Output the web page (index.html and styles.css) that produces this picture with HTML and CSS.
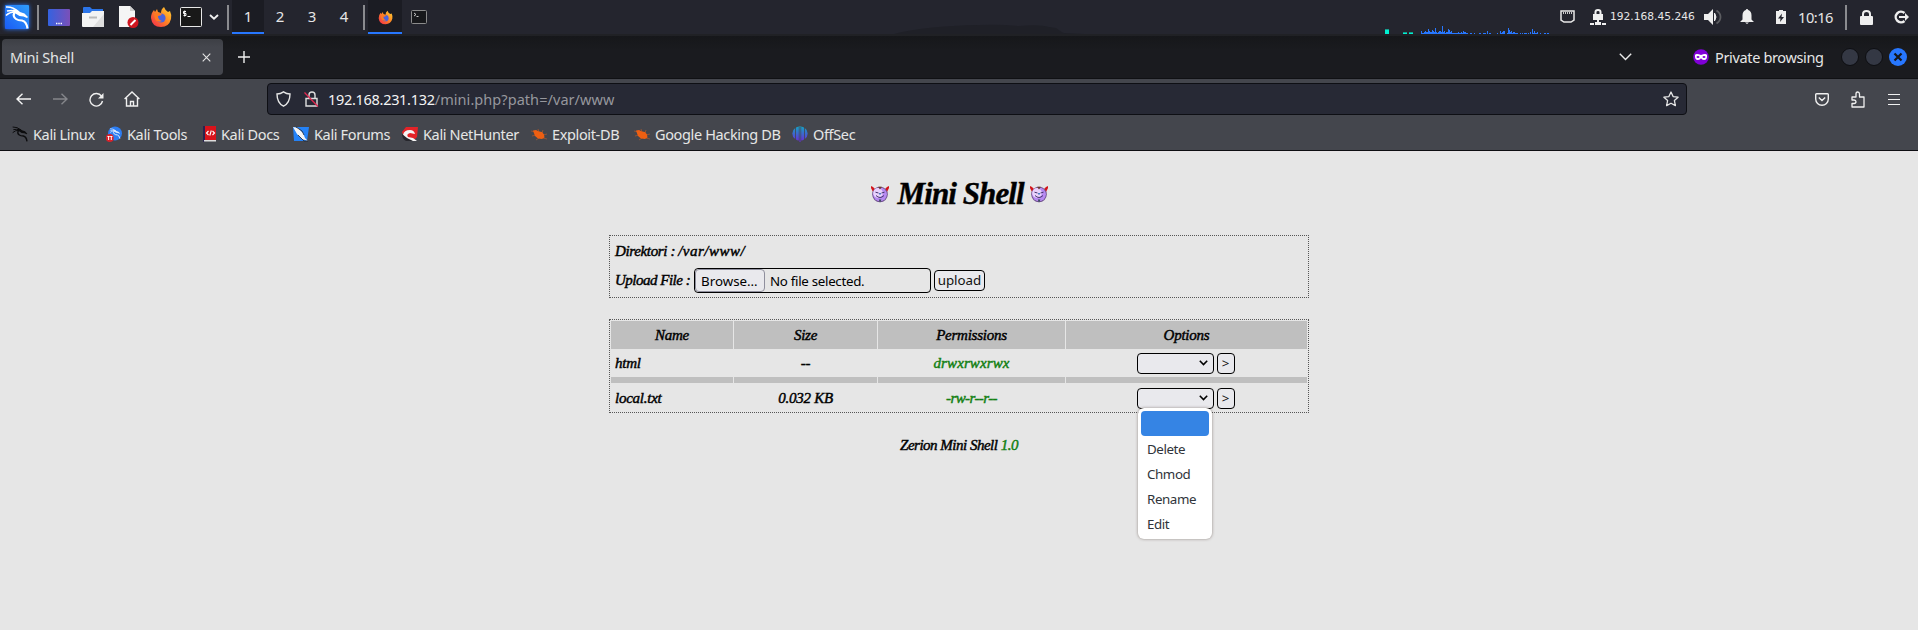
FILE: index.html
```
<!DOCTYPE html>
<html lang="en">
<head>
<meta charset="utf-8">
<title>Mini Shell</title>
<link rel="stylesheet" href="styles.css">
</head>
<body>
<svg class="defs" width="0" height="0">
  <defs>
    <linearGradient id="gKali" x1="0" y1="1" x2="1" y2="0"><stop offset="0" stop-color="#1a5cf5"/><stop offset="1" stop-color="#2f9dfb"/></linearGradient>
    <linearGradient id="gDesk" x1="0" y1="0" x2="1" y2="0"><stop offset="0" stop-color="#3462e0"/><stop offset="1" stop-color="#7b50b8"/></linearGradient>
    <linearGradient id="gFox" x1="1" y1="0" x2="0" y2="1"><stop offset="0" stop-color="#ffd83a"/><stop offset=".45" stop-color="#ff8a22"/><stop offset="1" stop-color="#f3234f"/></linearGradient>
    <linearGradient id="gOff" x1="0" y1="0" x2="0" y2="1"><stop offset="0" stop-color="#12a5c4"/><stop offset="1" stop-color="#6b27d9"/></linearGradient>
    <symbol id="dragon" viewBox="0 0 24 24">
      <path d="M1 1.500q7-.5 13 5M2 5.500q5-1 9 0M1 10q4-4 10-3.500" fill="none" stroke="currentColor" stroke-width="1.500"/>
      <path d="M10 6.500q-3 4 1 7 2 1.500 6 1.500 4.500 1 5.500 8" fill="none" stroke="currentColor" stroke-width="2.100"/>
      <path d="M8 4q4-.5 7 2.500l4.500 1.500 3.500 3.500-1 1-3.500-1.500-4-.5-4-2.500z" fill="currentColor"/>
    </symbol>
    <symbol id="fox" viewBox="0 0 22 22">
      <path d="M14 1q1 3 4 5l2-1q2 4 1 8-2 8-10 8Q2 21 1 12 1 7 4 4l1 2 2-3 1 3 3 1q0-4 3-6z" fill="url(#gFox)"/>
      <circle cx="11" cy="12" r="4.600" fill="#4a63dc"/>
      <path d="M4 8q4-2 8 0-1 2-4 2 0 4 4 5-5 2-7-2z" fill="#ff7a22"/>
    </symbol>
    <symbol id="bug" viewBox="0 0 16 16">
      <path d="M0 5l5 1M1 10l4-1M5 14l3-2M7 3l1 3M12 4l-1 3M16 8l-4 1M16 13l-4-1" stroke="#a5572f" stroke-width=".8"/>
      <path d="M2 4.500l3-.5 3 1.500 3 .5 2 2.500 .5 3-2.500 1.500-4-.5-3-2.500z" fill="#ee5f12"/>
    </symbol>
    <symbol id="devil" viewBox="0 0 18 18">
      <path d="M0 1l2 1 2 2-2 3L0 3zM18 1l-2 1-2 2 2 3 2-4z" fill="#d3151c"/>
      <circle cx="9" cy="9.500" r="7.800" fill="#6e4f8c"/>
      <circle cx="9" cy="9.300" r="6.900" fill="#b78af2"/>
      <ellipse cx="7" cy="8" rx="4.800" ry="5" fill="#e9d2fd"/>
      <path d="M7 1.800h4L9 4.600z" fill="#6b3a2c"/>
      <path d="M4.500 7.200l3 .8M13.500 7.200l-3 .8M5 10.500q4 4 8 0" stroke="#45356e" fill="none"/>
      <path d="M8 8h2v1.500H8z" fill="#4b7fc4"/><path d="M7.800 14.500h2.600L9 17.500z" fill="#324b52"/>
    </symbol>
  </defs>
</svg>

<header class="panel">
  <svg class="kali" width="28" height="28" viewBox="0 0 28 28"><rect x="2" y="2" width="24" height="24" rx="1" fill="url(#gKali)"/><g color="#fff"><use href="#dragon" x="2" y="2.500" width="24" height="24"/></g></svg>
  <i class="sep s1"></i>
  <svg class="desk" width="22" height="17" viewBox="0 0 22 17"><rect width="22" height="17" rx="1" fill="url(#gDesk)"/><path d="M8 14.500h6" stroke="#fff" stroke-width="1.400" stroke-dasharray="1.400 .9"/></svg>
  <svg class="folder" width="22" height="20" viewBox="0 0 22 20"><path d="M1 1q0-1 1-1h6l2 2h11v6H1z" fill="#2b74e8"/><path d="M0 6h8l2-2h12v15q0 1-1 1H1q-1 0-1-1z" fill="#f3f3f3"/><path d="M22 7v13H11z" fill="#dedede"/><path d="M7 10.500h8" stroke="#bbb" stroke-width="2"/></svg>
  <svg class="doc" width="21" height="22" viewBox="0 0 21 22"><path d="M1 0h11l5 5v16H1z" fill="#f5f5f5"/><path d="M12 0v5h5z" fill="#cfcfcf"/><circle cx="15" cy="16.500" r="5.500" fill="#cf1620"/><path d="M12.500 19l5-5" stroke="#fff" stroke-width="2"/></svg>
  <svg class="foxi" width="22" height="22"><use href="#fox"/></svg>
  <svg class="term" width="22" height="20" viewBox="0 0 22 20"><rect x=".5" y=".5" width="21" height="19" rx="1" fill="#191919" stroke="#e8e8e8"/><path d="M6 4.500H3.500V6.500H6v2H3.500M4.700 3.500v6M7.500 9.500h3" fill="none" stroke="#fff"/></svg>
  <svg class="chev" width="10" height="6" viewBox="0 0 10 6"><path d="M1 1l4 3.600L9 1" fill="none" stroke="#f0f0f0" stroke-width="1.900"/></svg>
  <i class="sep s2"></i>
  <nav class="spaces"><span class="on">1</span><span>2</span><span>3</span><span>4</span></nav>
  <i class="sep s3"></i>
  <span class="task on"><svg width="15" height="15"><use href="#fox" width="15" height="15"/></svg></span>
  <svg class="task2" width="16" height="14" viewBox="0 0 16 14"><rect x=".5" y=".5" width="15" height="13" rx="1" fill="#17181b" stroke="#8b8b8b"/><path d="M3 3l2 1.500L3 6M5.500 6.500h2" fill="none" stroke="#d8d8d8" stroke-width=".9"/></svg>
  <svg class="hill" width="200" height="10" viewBox="0 0 200 10"><path d="M0 10Q30 2 85 1q20-1 40 1 20-2 30 1l7 1q5 4 8 5l20 1z" fill="#1f2027"/></svg>
  <svg class="graph" width="170" height="10" viewBox="0 0 170 10"><path d="M0 5h4v4H0zM18 8h4v1h-4zM24 8h4v1h-4z" fill="#00f0d0"/><path d="M0 4h4v1H0zM18 7h4v1h-4zM24 7h4v1h-4z" fill="#159c8d"/>
    <path fill="#2777ff" d="M36 6h1v2h1V8h1V7h1V6h1v1h1v0h1V4h1v2h1v1h2V5h1v1h1v1h1V3h1v4h1v1h1V7h1V6h2v1h1V1h1v6h1V6h1v2h1V7h2V4h1v1h1v2h1V6h1v2h6V7h1v1h2V7h1v1h1V6h1v1h2v1h2v1H36zM85 8h2v1h-2zM89 8h1v1h-1zM94 8h2v1h-2zM98 8h3v1h-3zM102 6h1v3h-1zM104 8h2v1h-2zM112 8h1v1h-1zM115 6h1v2h1V7h1V6h2v3h-5zM122 8h1V3h1v2h1v2h1V6h1v2h1V7h2v1h3v1h-11zM135 8h1v1h-1zM137 8h1v1h-1zM139 8h3v1h-3zM143 8h1v1h-1zM145 7h1v2h-1zM147 4h1v4h1V6h1v2h2V7h1v2h-6zM155 8h1v1h-1zM159 8h2v1h-2zM162 8h2v1h-2z"/></svg>
  <svg class="eth" width="15" height="13" viewBox="0 0 15 13"><path d="M1 1h13v9l-3 2H4l-3-2z" fill="none" stroke="#e8e8e8" stroke-width="1.500"/><path d="M3.500 2v2M5.500 2v2M7.500 2v2M9.500 2v2M11.500 2v2" stroke="#ccc"/></svg>
  <svg class="vpn" width="16" height="16" viewBox="0 0 16 16"><path d="M5.500 5V3q0-2 2.500-2t2.500 2v2" fill="none" stroke="#f0f0f0" stroke-width="2"/><path d="M3 5h10v6H3zM0 14h4v2H0zM5 13h6v3H5zM12 14h4v2h-4zM7 11h2v2H7z" fill="#f0f0f0"/></svg>
  <span class="ip">192.168.45.246</span>
  <svg class="vol" width="18" height="16" viewBox="0 0 18 16"><path d="M0 5h4l5-5v16l-5-5H0z" fill="#eee"/><path d="M10.500 4q3 4 0 8z" fill="#eee" stroke="#eee"/><path d="M12.500 1.500q4 2.500 4 6.500t-4 6.500" fill="none" stroke="#5c5d61" stroke-width="1.800"/></svg>
  <svg class="bell" width="14" height="15" viewBox="0 0 14 15"><path d="M7 0q1 0 1.200 1 3.300 1 3.300 5.500v4L14 13H0l2.500-2.500v-4Q2.500 2 5.800 1 6 0 7 0zM5 13.500h4L7 15z" fill="#eee"/></svg>
  <svg class="batt" width="10" height="14" viewBox="0 0 10 14"><path d="M0 1h3V0h4v1h3v13H0z" fill="#eee"/><path d="M6 3.500L2 8.500h2.500L4 12l4-5H5.500z" fill="#24252d"/></svg>
  <span class="clock">10:16</span>
  <i class="sep s4"></i>
  <svg class="lock" width="13" height="15" viewBox="0 0 13 15"><path d="M3 7V4q0-3 3.500-3T10 4v3" fill="none" stroke="#eee" stroke-width="2"/><rect y="6" width="13" height="9" rx="1" fill="#eee"/></svg>
  <svg class="out" width="15" height="14" viewBox="0 0 15 14"><path d="M10.500 3A5.300 5.300 0 1 0 10.500 11" fill="none" stroke="#eee" stroke-width="2.400"/><path d="M5 6h6V3l4 4-4 4V8H5z" fill="#eee"/></svg>
</header>

<div class="tabs">
  <div class="tab"><span>Mini Shell</span><svg width="9" height="9" viewBox="0 0 9 9"><path d="M.7.7l7.600 7.600M8.300.7L.7 8.300" stroke="#e4e4e4" stroke-width="1.100"/></svg></div>
  <svg class="plus" width="12" height="12" viewBox="0 0 12 12"><path d="M6 0v12M0 6h12" stroke="#f0f0f0" stroke-width="1.400"/></svg>
  <svg class="all" width="13" height="8" viewBox="0 0 13 8"><path d="M.8.8l5.700 5.700L12.200.8" fill="none" stroke="#eaeaea" stroke-width="1.400"/></svg>
  <svg class="mask" width="16" height="16" viewBox="0 0 16 16"><circle cx="8" cy="8" r="7.800" fill="#8000d7"/><path d="M8 6q5-2 6 0 .5 5-3 5-2 0-3-1.700Q7 11 5 11q-3.500 0-3-5 1-2 6 0z" fill="#fff"/><ellipse cx="5" cy="8" rx="1.500" ry="1" fill="#8000d7"/><ellipse cx="11" cy="8" rx="1.500" ry="1" fill="#8000d7"/></svg>
  <span class="pb">Private browsing</span>
  <i class="wb"></i><i class="wb"></i>
  <svg class="close" width="18" height="18" viewBox="0 0 18 18"><circle cx="9" cy="9" r="9" fill="#2777ff"/><path d="M5.500 5.500l7 7M12.500 5.500l-7 7" stroke="#15161c" stroke-width="2.200"/></svg>
</div>

<div class="toolbar">
  <div class="nav">
    <svg class="back" width="15" height="12" viewBox="0 0 15 12"><path d="M15 6H1M6.500.7L1 6l5.500 5.300" fill="none" stroke="#f4f4f4" stroke-width="1.400"/></svg>
    <svg class="fwd" width="15" height="12" viewBox="0 0 15 12"><path d="M0 6h14M8.500.7L14 6l-5.500 5.300" fill="none" stroke="#85868b" stroke-width="1.400"/></svg>
    <svg class="reload" width="15" height="15" viewBox="0 0 15 15"><path d="M12.500 4.200A6.300 6.300 0 1 0 13.500 9" fill="none" stroke="#f0f0f0" stroke-width="1.400"/><path d="M14.500 1v5.500H9z" fill="#f0f0f0"/></svg>
    <svg class="home" width="16" height="16" viewBox="0 0 16 16"><path d="M.6 8L8 1l7.400 7M2.500 7v8h11V7M6.500 15v-4.500h3V15" fill="none" stroke="#f0f0f0" stroke-width="1.400"/></svg>
    <div class="url">
      <svg width="15" height="16" viewBox="0 0 15 16"><path d="M7.500.8q3 2 6.500 2.200 0 9-6.500 12.200Q1 12 1 3 4.500 2.800 7.500.8z" fill="none" stroke="#e6e6e6" stroke-width="1.400"/></svg>
      <svg class="insecure" width="15" height="16" viewBox="0 0 15 16"><path d="M5 7V4q0-3 3-3t3 3v3M2 15V7.500h11V15z" fill="none" stroke="#dedede" stroke-width="1.400"/><path d="M.5 1.500l13.500 14" stroke="#e22850" stroke-width="1.300"/></svg>
      <span class="addr"><b>192.168.231.132</b><span>/mini.php?path=/var/www</span></span>
      <svg class="star" width="16" height="16" viewBox="0 0 16 16"><path d="M8 1l2.100 4.600 5 .6-3.700 3.400 1 5L8 12.200 3.600 14.600l1-5L.9 6.200l5-.6z" fill="none" stroke="#e6e6e6" stroke-width="1.300" stroke-linejoin="round"/></svg>
    </div>
    <svg class="pocket" width="14" height="13" viewBox="0 0 14 13"><path d="M1.500.7h11q.8 0 .8.800v4.500a6.300 6.300 0 0 1-12.600 0V1.500q0-.8.800-.8zM3.800 4.500L7 7.500l3.200-3" fill="none" stroke="#f0f0f0" stroke-width="1.400"/></svg>
    <svg class="ext" width="14" height="17" viewBox="0 0 14 17"><path d="M1 6h4V3q0-2 1.700-2T8.500 3v3H13v10H1v-3.500h2q2 0 2-1.700T3 9H1z" fill="none" stroke="#f0f0f0" stroke-width="1.300" stroke-linejoin="round"/></svg>
    <svg class="menu" width="12" height="11" viewBox="0 0 12 11"><path d="M0 .5h12M0 5.500h12M0 10.500h12" stroke="#f0f0f0" stroke-width="1"/></svg>
  </div>
  <div class="marks">
    <a><svg width="16" height="16" color="#0c0c0e"><use href="#dragon"/></svg>Kali Linux</a>
    <a><svg width="16" height="16" viewBox="0 0 16 16"><circle cx="9" cy="7.500" r="7" fill="#2c7df2"/><g color="#dcebff"><use href="#dragon" x="3" y="2" width="12" height="11"/></g><circle cx="3.800" cy="12" r="3.900" fill="#d9222a"/><path d="M1.500 10.500h2.200M2.600 10.500v3.500M4.200 10.500h2.200M5.300 10.500v3.500" stroke="#fff"/></svg>Kali Tools</a>
    <a><svg width="13" height="16" viewBox="0 0 13 16"><path d="M0 0h2v16H0z" fill="#2a2350"/><path d="M2 0h11v14H2z" fill="#d9131b"/><path d="M1 14h12v1.500H1z" fill="#ddd"/><path d="M5.500 5L3.500 7l2 2M9.500 5l2 2-2 2M8.300 4.500l-1.500 5" fill="none" stroke="#fff" stroke-width="1.100"/></svg>Kali Docs</a>
    <a><svg width="16" height="16" viewBox="0 0 16 16"><path d="M0 1h16l-2 14H1z" fill="#2482f7"/><path d="M0 1l5 1 5 5 2 5 3 3-6-2-5-5z" fill="#f4f4f4"/><path d="M3 1l6 4 2 4M5 9l6 6h4" stroke="#20242e" fill="none" stroke-width=".8"/></svg>Kali Forums</a>
    <a><svg width="16" height="16" viewBox="0 0 16 16"><path d="M4 1h12l-1 10-3 3H3L0 6z" fill="#e32328"/><path d="M1 9q1-5 7-5 4 0 5 4l-5-1q-4 1-2 4l5 1 4 3-5 0Q4 14 1 9z" fill="#f5f5f5"/><path d="M0 8q0 5 4 7l7 0-6-3z" fill="#26262c"/></svg>Kali NetHunter</a>
    <a><svg width="16" height="16"><use href="#bug"/></svg>Exploit-DB</a>
    <a><svg width="16" height="16"><use href="#bug"/></svg>Google Hacking DB</a>
    <a><svg width="16" height="16" viewBox="0 0 16 16"><path d="M3.200 2v11Q.3 11 .3 7.500T3.200 2zM4 1.500Q5 .8 6.800.5v14Q5 14.300 4 13.500zM12.800 2v11q2.900-2 2.900-5.500T12.800 2zM12 1.500Q11 .8 9.200.5v14q1.800-.2 2.800-1zM7.500 0h1v16h-1z" fill="url(#gOff)"/></svg>OffSec</a>
  </div>
</div>

<main class="page">
  <h1><svg width="18" height="18"><use href="#devil"/></svg><span>Mini Shell</span><svg width="18" height="18"><use href="#devil"/></svg></h1>
  <section class="box">
    <p class="dir"><span>Direktori :</span><span class="path">/var/www/</span></p>
    <p class="up"><span class="lbl">Upload File :</span><span class="file"><span class="browse">Browse…</span><span class="none">No file selected.</span></span><button>upload</button></p>
  </section>
  <section class="list">
    <div class="row head"><span>Name</span><span>Size</span><span>Permissions</span><span>Options</span></div>
    <div class="row"><span class="l">html</span><span>--</span><span class="g mode">drwxrwxrwx</span><span class="opt"><i class="sel"><svg width="9" height="6" viewBox="0 0 9 6"><path d="M.8.8l3.700 3.700L8.200.8" fill="none" stroke="#000" stroke-width="1.600"/></svg></i><button>&gt;</button></span></div>
    <div class="row thin"><span></span><span></span><span></span><span></span></div>
    <div class="row"><span class="l">local.txt</span><span>0.032 KB</span><span class="g mode2">-rw-r--r--</span><span class="opt"><i class="sel"><svg width="9" height="6" viewBox="0 0 9 6"><path d="M.8.8l3.700 3.700L8.200.8" fill="none" stroke="#000" stroke-width="1.600"/></svg></i><button>&gt;</button>
      <ul class="drop"><li class="cur"></li><li>Delete</li><li>Chmod</li><li>Rename</li><li>Edit</li></ul></span></div>
  </section>
  <footer>Zerion Mini Shell <span class="g">1.0</span></footer>
</main>
</body>
</html>
```
FILE: styles.css
```
* { box-sizing: border-box; }
body { margin: 0; width: 1918px; height: 630px; overflow: hidden; background: #e6e6e6; font-family: "Noto Sans", sans-serif; color: #e6e6e6; }
svg { display: block; flex: none; }
svg.defs { position: absolute; }
i { font-style: normal; }

.panel { height: 36px; padding-bottom: 2px; background: linear-gradient(#24252e 0 34px, #202125 34px); display: flex; align-items: center; }
.sep { width: 2px; height: 25px; background: #8a8b8f; flex: none; }
.kali { margin: 0 0 0 3px; filter: drop-shadow(0 0 2px #2777ff); }
.s1 { margin-left: 6px; }
.desk { margin-left: 9px; }
.folder { margin-left: 12px; }
.doc { margin-left: 14px; }
.foxi { margin-left: 11px; }
.term { margin-left: 8px; }
.chev { margin-left: 7px; }
.s2 { margin-left: 8px; }
.spaces { display: flex; margin-left: 3px; font-size: 15px; }
.spaces span { width: 32px; height: 34px; line-height: 33px; text-align: center; }
.on { background: #1b1c23; border-bottom: 2px solid #2777ff; }
.s3 { margin-left: 3px; }
.task { width: 34px; height: 34px; margin-left: 3px; display: flex; align-items: center; justify-content: center; padding-top: 2px; }
.task2 { margin-left: 9px; }
.hill { margin-left: 467px; align-self: flex-end; }
.graph { margin-left: 291px; align-self: flex-end; margin-bottom: -1px; }
.eth { margin-left: 5px; margin-top: -2px; }
.vpn { margin-left: 15px; }
.ip { margin-left: 4px; width: 89px; font: 10.67px "DejaVu Sans", sans-serif; margin-top: -2px; white-space: nowrap; }
.vol { margin-left: 5px; }
.bell { margin-left: 18px; margin-top: -1px; }
.batt { margin-left: 22px; }
.clock { margin-left: 12px; width: 38px; font-size: 14.67px; letter-spacing: -.5px; margin-top: -1px; }
.s4 { margin-left: 9px; }
.lock { margin-left: 13px; }
.out { margin-left: 21px; }

.tabs { height: 43px; border-bottom: 1px solid #101114; background: linear-gradient(#16171a, #1a1b1f 14px); display: flex; align-items: center; font-size: 14.5px; }
.tab { width: 221px; height: 36px; margin-left: 2px; border-radius: 4px; background: linear-gradient(#3d3f45, #44464d 8px); display: flex; align-items: center; justify-content: space-between; padding: 0 12px 0 8px; letter-spacing: -.2px; }
.plus { margin-left: 15px; }
.all { margin-left: 1369px; }
.mask { margin-left: 61px; }
.pb { margin-left: 6px; width: 126px; white-space: nowrap; letter-spacing: -.35px; margin-top: -1px; }
.wb { width: 18px; height: 18px; border-radius: 50%; background: #343844; border: 1px solid #0d0e12; margin-right: 6px; }
.close { flex: none; }

.toolbar { height: 72px; background: #44464d; border-bottom: 1px solid #0d0e12; padding-top: 4px; }
.nav { display: flex; align-items: center; height: 32px; }
.back { margin-left: 16px; }
.fwd { margin-left: 22px; }
.reload { margin-left: 21px; }
.home { margin-left: 20px; }
.url { margin-left: 127px; width: 1420px; height: 32px; background: #272935; border: 1px solid #0e0f14; border-radius: 4px; display: flex; align-items: center; padding: 0 7px 0 8px; font-size: 14.5px; }
.insecure { margin-left: 13px; }
.addr { margin-left: 9px; flex: 1; letter-spacing: -.3px; }
.addr b { font-weight: 400; color: #f4f4f4; }
.addr span { color: #96979d; letter-spacing: .06px; }
.pocket { margin-left: 128px; }
.ext { margin-left: 22px; }
.menu { margin-left: 23px; }
.marks { display: grid; grid-template-columns: 94px 97px 90px 109px 129px 103px 158px 80px; padding: 1px 0 0 12px; height: 37px; align-items: center; font-size: 14.5px; letter-spacing: -.36px; }
.marks a { display: flex; align-items: center; gap: 5px; white-space: nowrap; }

.page { color: #000; font: italic 400 15px "Liberation Serif", serif; letter-spacing: -.25px; -webkit-text-stroke: .45px; border-top: 1px solid #e8e4e6; }
.file, .page button, .drop { -webkit-text-stroke: 0; letter-spacing: 0; }
h1 { margin: 20px 0 0; height: 44px; display: flex; justify-content: center; align-items: center; font-size: 31px; line-height: 44px; letter-spacing: -.9px; }
h1 span { margin: 0 3px 0 9px; width: 129px; white-space: nowrap; }
p { margin: 0; }
.box { width: 700px; height: 63px; margin: 19px auto 0; border: 1px dotted #555; padding: 3px 5px; }
.dir { height: 24px; line-height: 24px; display: flex; gap: 3px; letter-spacing: -.35px; }
.path { letter-spacing: .5px; }
.up { display: flex; align-items: center; height: 34px; }
.lbl { width: 79px; white-space: nowrap; letter-spacing: -.5px; }
.file { width: 237px; height: 25px; border: 1px solid #000; border-radius: 4px; display: flex; align-items: center; font: 13.33px "Noto Sans", sans-serif; white-space: nowrap; }
.browse { width: 70px; height: 23px; line-height: 22px; background: #e9e9ed; border: 1px solid #8f8f9d; border-radius: 4px; padding-left: 5px; }
.file .none { margin-left: 5px; letter-spacing: -.3px; padding-top: 1px; }
button { height: 21px; padding: 0; margin: 0 0 0 3px; width: 51px; border: 1px solid #000; border-radius: 4px; background: #e9e9ed; color: #111; font: 13.33px/18px "Noto Sans", sans-serif; }
.list { width: 700px; height: 94px; margin: 21px auto 0; border: 1px dotted #555; padding: 1px; }
.row { display: grid; grid-template-columns: 122px 143px 187px 1fr; gap: 1px; height: 29px; line-height: 30px; text-align: center; }
.head { height: 27px; line-height: 28px; }
.thin { height: 6px; }
.head span, .thin span { background: #bfbfbf; }
.row .l { text-align: left; padding-left: 4px; }
.g { color: #128012; }
.mode { letter-spacing: .1px; }
.mode2 { letter-spacing: -.6px; }
.opt { position: relative; display: flex; justify-content: center; align-items: center; padding-right: 2px; }
.opt button { width: 18px; }
.sel { width: 77px; height: 21px; border: 1px solid #000; border-radius: 4px; background: #e9e9ed; display: flex; align-items: center; justify-content: flex-end; padding-right: 5px; }
.drop { position: absolute; left: 72px; top: 25px; width: 74px; height: 131px; margin: 0; padding: 3px; list-style: none; background: #fff; border-radius: 6px; box-shadow: 0 0 3px rgba(60, 40, 30, .5); font: 13.33px/26px "Noto Sans", sans-serif; color: #30343a; text-align: left; }
.drop li { height: 25px; padding-left: 6px; letter-spacing: -.4px; }
.drop .cur { background: #3584e4; border-radius: 4px; }
footer { margin-top: 22px; text-align: center; line-height: 20px; letter-spacing: -.5px; }
```
